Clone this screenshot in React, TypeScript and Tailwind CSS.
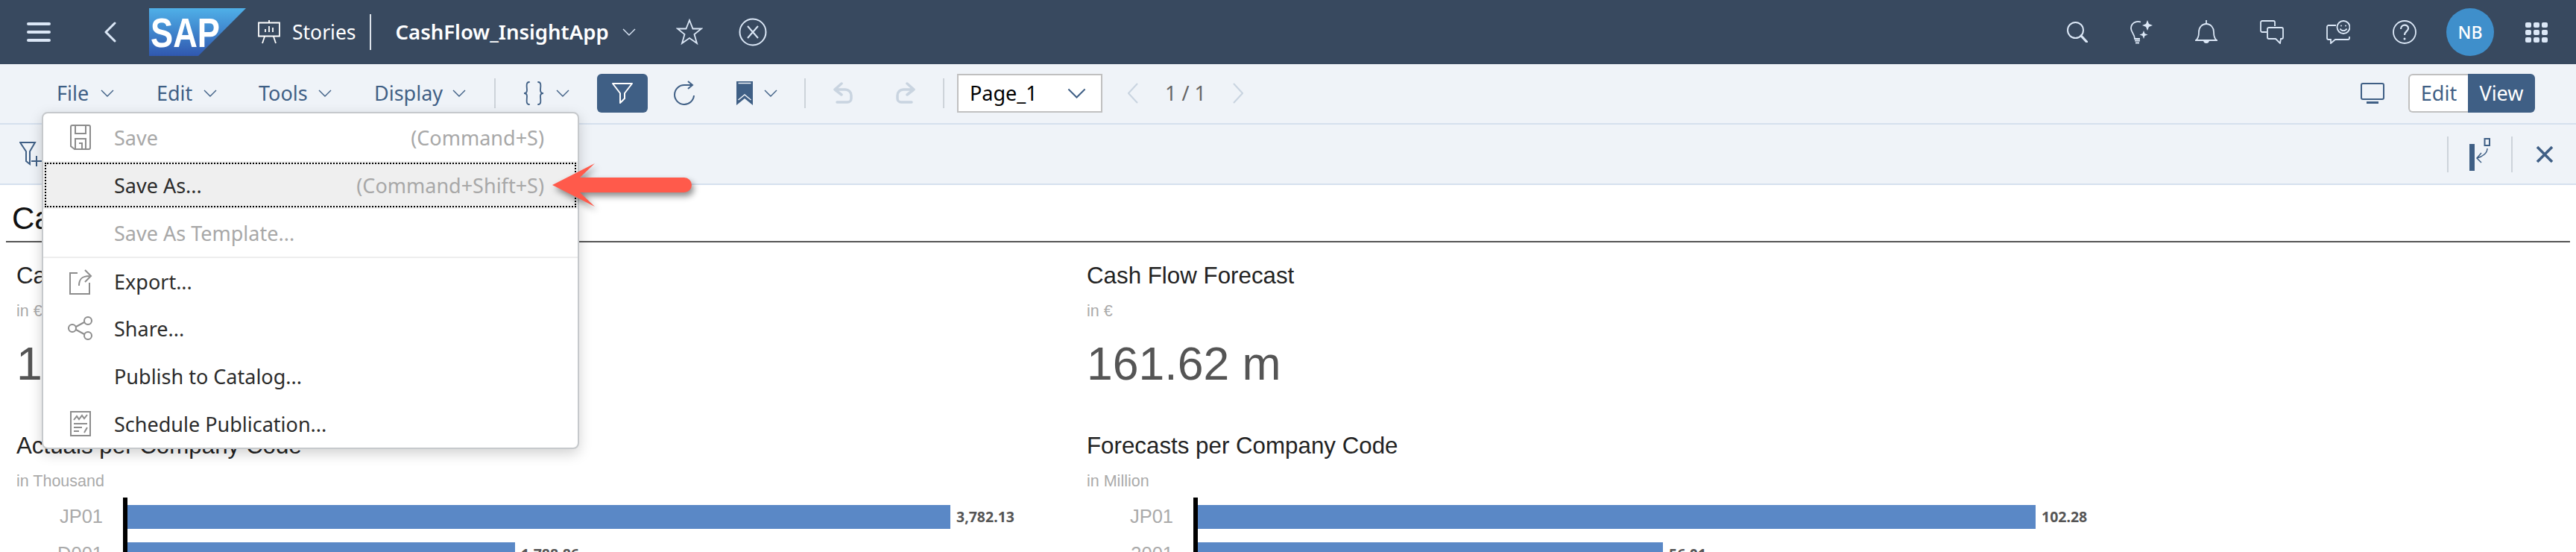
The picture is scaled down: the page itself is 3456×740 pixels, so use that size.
import type { ReactNode } from 'react';

function Chevron({ className = 'w-[18px] h-[10px] text-[#3f5f85]' }: { className?: string }) {
  return (
    <svg viewBox="0 0 18 10" className={className} fill="none" stroke="currentColor" strokeWidth="1.4">
      <path d="M1 1l8 8 8-8" />
    </svg>
  );
}

function Sep({ h = 'h-[40px]' }: { h?: string }) {
  return <div className={`w-[2px] ${h} bg-[#cdd3da]`} />;
}

function MenuLabel({ label, width }: { label: string; width: string }) {
  return (
    <div className={`flex items-center justify-between ${width}`}>
      <span className="text-[27px] leading-none text-[#3f5f85]">{label}</span>
      <Chevron />
    </div>
  );
}

function HeaderIcons() {
  return (
    <div className="mr-[40px] flex items-center gap-[57px] text-[#dbe7f6]">
      <svg viewBox="0 0 28 28" className="w-[28px] h-[28px]" fill="none" stroke="currentColor" strokeWidth="2">
        <circle cx="11.500" cy="11.500" r="10.500" />
        <path d="M19 19l7.500 8" strokeWidth="3.200" strokeLinecap="round" />
      </svg>
      <svg viewBox="0 0 30 32" className="w-[30px] h-[32px]" fill="none" stroke="currentColor" strokeWidth="1.800">
        <path d="M14 2.500C7 0 1 5 1 11c0 5 5 8 5 14h7" />
        <path d="M6 27.500h7M7 30.500h5" strokeWidth="2.200" />
        <path d="M23 0l2 5 5 2-5 2-2 5-2-5-5-2 5-2zM18 14l1.500 4 4 1.500-4 1.500-1.500 4-1.500-4-4-1.500 4-1.500z" fill="currentColor" stroke="none" />
      </svg>
      <svg viewBox="0 0 30 32" className="w-[30px] h-[32px]" fill="none" stroke="currentColor" strokeWidth="1.800">
        <path d="M1 27c3-2 4-5 4-11 0-6 4-11 10-11s10 5 10 11c0 6 1 9 4 11z" />
        <path d="M15 0v5" />
        <path d="M12 27a3 3 0 0 0 6 0" fill="currentColor" />
      </svg>
      <svg viewBox="0 0 32 32" className="w-[32px] h-[32px]" fill="none" stroke="currentColor" strokeWidth="1.800">
        <path d="M9 16H3a2 2 0 0 1-2-2V3a2 2 0 0 1 2-2h15a2 2 0 0 1 2 2v5" />
        <path d="M12 10h17a2 2 0 0 1 2 2v11a2 2 0 0 1-2 2h-1l-1 6-6-6h-9a2 2 0 0 1-2-2V12a2 2 0 0 1 2-2z" />
      </svg>
      <svg viewBox="0 0 32 32" className="w-[32px] h-[32px]" fill="none" stroke="currentColor" strokeWidth="1.800">
        <path d="M13 7H3a2 2 0 0 0-2 2v15a2 2 0 0 0 2 2h3v5l6-5h17a2 2 0 0 0 2-2v-2" />
        <circle cx="23" cy="9.500" r="8.500" />
        <circle cx="20" cy="7.500" r="1" fill="currentColor" stroke="none" />
        <circle cx="26" cy="7.500" r="1" fill="currentColor" stroke="none" />
        <path d="M18.500 11.500c2 3.500 7 3.500 9 0" />
      </svg>
      <svg viewBox="0 0 32 32" className="w-[32px] h-[32px]" fill="none" stroke="currentColor" strokeWidth="1.800">
        <circle cx="16" cy="16" r="15" />
        <path d="M11 12c0-7 10-7 10-1 0 4-5 4-5 9" strokeWidth="2.200" />
        <circle cx="16" cy="25" r="1.500" fill="currentColor" stroke="none" />
      </svg>
    </div>
  );
}

function TopBar() {
  return (
    <header className="flex h-[86px] items-center bg-[#38495f] pl-[36px] pr-[38px]">
      <div className="flex w-[32px] flex-col gap-[7px]">
        <div className="h-[4px] rounded-full bg-[#dbe7f6]" />
        <div className="h-[4px] rounded-full bg-[#dbe7f6]" />
        <div className="h-[4px] rounded-full bg-[#dbe7f6]" />
      </div>
      <svg viewBox="0 0 16 28" className="ml-[72px] w-[16px] h-[28px] text-[#dbe7f6]" fill="none" stroke="currentColor" strokeWidth="3" strokeLinecap="round" strokeLinejoin="round">
        <path d="M14 2L2 14l12 12" />
      </svg>
      <svg viewBox="0 0 130 64" className="ml-[44px] w-[130px] h-[64px]">
        <defs>
          <linearGradient id="sapGrad" x1="0" y1="0" x2="0" y2="1">
            <stop offset="0" stopColor="#4fb0e8" />
            <stop offset="1" stopColor="#3058b0" />
          </linearGradient>
        </defs>
        <path d="M0 0h130L66 64H0z" fill="url(#sapGrad)" />
        <text x="2" y="52" fill="#fff" fontFamily="Liberation Sans" fontWeight="700" fontSize="56" textLength="93" lengthAdjust="spacingAndGlyphs">SAP</text>
      </svg>
      <svg viewBox="0 0 30 32" className="ml-[16px] w-[30px] h-[32px] text-white" fill="none" stroke="currentColor" strokeWidth="1.800">
        <path d="M15 0v3M1 3.500h28v18H1zM9 22l-3 9M21 22l3 9" />
        <path d="M10 16v-4M15 16V8M20 16v-6" />
      </svg>
      <span className="ml-[16px] text-[26.500px] leading-none text-white">Stories</span>
      <div className="ml-[18px] h-[48px] w-[2px] bg-[#dde3ea]" />
      <span className="ml-[33px] text-[27.500px] leading-none font-semibold text-white">CashFlow_InsightApp</span>
      <Chevron className="ml-[18px] w-[18px] h-[10px] text-[#dbe7f6]" />
      <svg viewBox="0 0 36 36" className="ml-[54px] w-[36px] h-[36px] text-[#dbe7f6]" fill="none" stroke="currentColor" strokeWidth="1.800">
        <path d="M18 2l4.500 11.500H34l-9.500 7.500L28 33l-10-7-10 7 3.500-12L2 13.500h11.500z" />
      </svg>
      <svg viewBox="0 0 38 38" className="ml-[48px] w-[38px] h-[38px] text-[#dbe7f6]" fill="none" stroke="currentColor" strokeWidth="2">
        <circle cx="19" cy="19" r="17.500" />
        <path d="M12 11l14 16M26 11L12 27" />
      </svg>
      <div className="flex-1" />
      <HeaderIcons />
      <div className="flex h-[64px] w-[64px] items-center justify-center rounded-full bg-[#3f8fcb] text-[23px] font-medium text-white">NB</div>
      <div className="ml-[42px] grid grid-cols-3 gap-[3px]">
        {[...Array(9)].map((_, i) => (
          <div key={i} className="h-[7px] w-[8px] rounded-[2px] bg-[#dbe7f6]" />
        ))}
      </div>
    </header>
  );
}

function Toolbar() {
  return (
    <div className="flex h-[81px] items-center border-b-2 border-[#d5e0ee] bg-[#eff3f8] pl-[76px] pr-[55px] pb-[2px]">
      <MenuLabel label="File" width="w-[77px]" />
      <div className="ml-[57px]"><MenuLabel label="Edit" width="w-[81px]" /></div>
      <div className="ml-[56px]"><MenuLabel label="Tools" width="w-[98px]" /></div>
      <div className="ml-[57px]"><MenuLabel label="Display" width="w-[123px]" /></div>
      <div className="ml-[38px]"><Sep /></div>
      <svg viewBox="0 0 30 32" className="ml-[36px] w-[30px] h-[32px] text-[#3f5f85]" fill="none" stroke="currentColor" strokeWidth="1.800" strokeLinecap="round">
        <path d="M9 1C4 1 6 8 6 12c0 3-1 4-4 4 3 0 4 1 4 4 0 4-2 11 3 11M21 1c5 0 3 7 3 11 0 3 1 4 4 4-3 0-4 1-4 4 0 4 2 11-3 11" />
      </svg>
      <Chevron className="ml-[15px] w-[18px] h-[10px] text-[#3f5f85]" />
      <div className="ml-[37px] flex h-[52px] w-[68px] items-center justify-center rounded-[6px] bg-[#3f5f85]">
        <svg viewBox="0 0 28 30" className="w-[28px] h-[30px] text-white" fill="none" stroke="currentColor" strokeWidth="2">
          <path d="M1 2h26L17 15v7l-6 6V15z" strokeLinejoin="round" />
        </svg>
      </div>
      <svg viewBox="0 0 30 34" className="ml-[35px] w-[30px] h-[34px] text-[#3f5f85]" fill="none" stroke="currentColor" strokeWidth="2">
        <path d="M27 20A13 13 0 1 1 14 6h10M19 1l6 5-6 5" />
      </svg>
      <svg viewBox="0 0 22 32" className="ml-[54px] w-[22px] h-[32px] text-[#3f5f85]">
        <path d="M0 0h22v32L11 23 0 32z" fill="currentColor" />
        <path d="M2.500 2.500h17" stroke="#eff3f8" strokeWidth="1.500" />
        <path d="M2.500 25l8.500-7 8.500 7" stroke="#eff3f8" strokeWidth="1.500" fill="none" />
      </svg>
      <Chevron className="ml-[15px] w-[18px] h-[10px] text-[#3f5f85]" />
      <div className="ml-[36px]"><Sep /></div>
      <svg viewBox="0 0 28 30" className="ml-[36px] w-[28px] h-[30px] text-[#c9d4e0]" fill="none" stroke="currentColor" strokeWidth="3.500" strokeLinecap="round" strokeLinejoin="round">
        <path d="M12 2L3 10l9 7M3 10h14a8 8 0 0 1 8 8v4a5 5 0 0 1-5 5H6" />
      </svg>
      <svg viewBox="0 0 28 30" className="ml-[56px] w-[28px] h-[30px] text-[#c9d4e0]" fill="none" stroke="currentColor" strokeWidth="3.500" strokeLinecap="round" strokeLinejoin="round">
        <path d="M16 2l9 8-9 7M25 10H11a8 8 0 0 0-8 8v4a5 5 0 0 0 5 5h14" />
      </svg>
      <div className="ml-[36px]"><Sep /></div>
      <div className="ml-[17px] flex h-[52px] w-[195px] items-center justify-between border-2 border-[#c0c0c0] bg-white pl-[15px] pr-[20px]">
        <span className="text-[27px] leading-none text-black">Page_1</span>
        <Chevron className="w-[25px] h-[14px] text-[#3f5f85]" />
      </div>
      <svg viewBox="0 0 14 28" className="ml-[34px] w-[14px] h-[28px] text-[#c9d4e0]" fill="none" stroke="currentColor" strokeWidth="2">
        <path d="M13 1L1 14l12 13" />
      </svg>
      <span className="ml-[36px] text-[27px] leading-none text-[#666]">1 / 1</span>
      <svg viewBox="0 0 14 28" className="ml-[36px] w-[14px] h-[28px] text-[#c9d4e0]" fill="none" stroke="currentColor" strokeWidth="2">
        <path d="M1 1l12 13L1 27" />
      </svg>
      <div className="flex-1" />
      <svg viewBox="0 0 32 28" className="w-[32px] h-[28px] text-[#3f5f85]" fill="none" stroke="currentColor" strokeWidth="2">
        <rect x="1" y="1" width="30" height="21" rx="2" />
        <path d="M8 26.500h16" strokeWidth="3" />
      </svg>
      <div className="ml-[32px] flex h-[52px] w-[170px]">
        <div className="flex w-[80px] items-center justify-center rounded-l-[6px] border-2 border-r-0 border-[#c0c0c0] bg-white text-[27px] leading-none text-[#3f5f85]">Edit</div>
        <div className="flex w-[90px] items-center justify-center rounded-r-[6px] bg-[#3f5f85] text-[27px] leading-none text-white">View</div>
      </div>
    </div>
  );
}

function FilterBar() {
  return (
    <div className="flex h-[81px] items-center border-b-2 border-[#d5e0ee] bg-[#eff3f8] pl-[26px] pr-[30px]">
      <svg viewBox="0 0 32 34" className="w-[32px] h-[34px] text-[#3f5f85]" fill="none" stroke="currentColor" strokeWidth="2">
        <path d="M1 1h20l-7 12v17l-5-4V13zM23 19v14M16 26h14" />
      </svg>
      <div className="flex-1" />
      <Sep h="h-[48px]" />
      <svg viewBox="0 0 28 44" className="ml-[28px] w-[28px] h-[44px] text-[#3f5f85]" fill="none" stroke="currentColor">
        <rect x="0" y="8" width="7" height="36" fill="currentColor" stroke="none" />
        <rect x="20.500" y="1" width="6.500" height="9" strokeWidth="2" />
        <path d="M24 14c0 6-6 11-14 13M16 20l-6 7 6 6" strokeWidth="1.500" />
      </svg>
      <div className="ml-[28px]"><Sep h="h-[48px]" /></div>
      <svg viewBox="0 0 24 24" className="ml-[31px] w-[24px] h-[24px] text-[#3f5f85]" fill="none" stroke="currentColor" strokeWidth="3.600">
        <path d="M2 2l20 20M22 2L2 22" />
      </svg>
    </div>
  );
}

function Widget({ title, unit, children }: { title: string; unit: string; children: ReactNode }) {
  return (
    <div>
      <h3 className="text-[31.300px] leading-[36px] text-[#222]">{title}</h3>
      <p className="mt-[16px] text-[21.500px] leading-[26px] text-[#aaa]">{unit}</p>
      {children}
    </div>
  );
}

type Bar = { code: string; width: number; value: string };

function BarChart({ bars }: { bars: Bar[] }) {
  return (
    <div className="mt-[9px] ml-[143px] h-[90px] border-l-[6px] border-black pt-[10px]">
      {bars.map((b) => (
        <div key={b.code} className="relative mb-[18px] flex h-[32px] items-center">
          <span className="absolute right-full mr-[33px] text-[25.500px] leading-none text-[#aaa]">{b.code}</span>
          <div className="h-full bg-[#5a88c6]" style={{ width: b.width }} />
          <span className='ml-[8px] font-["Noto_Sans",sans-serif] text-[19.500px] leading-none font-bold text-[#555]'>{b.value}</span>
        </div>
      ))}
    </div>
  );
}

function Kpi({ value }: { value: string }) {
  return <div className="mt-[12px] h-[138px] text-[62.500px] leading-[90px] text-[#555]">{value}</div>;
}

function Content() {
  return (
    <main className='bg-white px-[8px] font-["Liberation_Sans",sans-serif]'>
      <div className="flex h-[77px] items-end border-b-2 border-[#555] pl-[8px] pb-[9px]">
        <h1 className="text-[42px] leading-none text-[#111]">Cash Flow Insights</h1>
      </div>
      <div className="grid grid-cols-[1436px_1fr] pt-[27px] pl-[14px]">
        <div>
          <Widget title="Cash Flow Actuals" unit="in €">
            <Kpi value="170.45 m" />
          </Widget>
          <Widget title="Actuals per Company Code" unit="in Thousand">
            <BarChart bars={[{ code: 'JP01', width: 1104, value: '3,782.13' }, { code: 'D001', width: 520, value: '1,788.86' }]} />
          </Widget>
        </div>
        <div>
          <Widget title="Cash Flow Forecast" unit="in €">
            <Kpi value="161.62 m" />
          </Widget>
          <Widget title="Forecasts per Company Code" unit="in Million">
            <BarChart bars={[{ code: 'JP01', width: 1124, value: '102.28' }, { code: '3001', width: 624, value: '56.01' }]} />
          </Widget>
        </div>
      </div>
    </main>
  );
}

function Item({ label, shortcut, icon, disabled, active, divider }: { label: string; shortcut?: string; icon?: ReactNode; disabled?: boolean; active?: boolean; divider?: boolean }) {
  return (
    <div className={`flex h-[64px] items-center pr-[45px] ${divider ? 'border-t-2 border-[#eeeeee]' : ''} ${active ? 'bg-[#efefef] outline-2 outline-dotted -outline-offset-[4px] outline-black' : ''}`}>
      <div className="flex w-[95px] justify-center pl-[4px] text-[#8c8c8c]">{icon}</div>
      <span className={`text-[27px] leading-none ${disabled ? 'text-[#a8a8a8]' : 'text-[#2b2b2b]'}`}>{label}</span>
      <div className="flex-1" />
      {shortcut && <span className="text-[27px] leading-none text-[#a8a8a8]">{shortcut}</span>}
    </div>
  );
}

function FileMenu() {
  return (
    <div className="absolute left-[56px] top-[150px] w-[721px] rounded-[8px] border-2 border-[#c6c9cc] bg-white shadow-[0_6px_18px_rgba(0,0,0,0.18)]">
      <Item
        label="Save"
        shortcut="(Command+S)"
        disabled
        icon={
          <svg viewBox="0 0 28 34" className="w-[28px] h-[34px]" fill="none" stroke="currentColor" strokeWidth="2">
            <path d="M3 1h22a2 2 0 0 1 2 2v28a2 2 0 0 1-2 2H6l-5-4V3a2 2 0 0 1 2-2zM7 1v11h14V1M7 33V19h14v14M12 25h4v8" />
          </svg>
        }
      />
      <Item label="Save As..." shortcut="(Command+Shift+S)" active />
      <Item label="Save As Template..." disabled />
      <Item
        label="Export..."
        divider
        icon={
          <svg viewBox="0 0 32 36" className="w-[32px] h-[36px]" fill="none" stroke="currentColor" strokeWidth="2">
            <path d="M12 7H2v28h26V20M14 24c0-9 4-13 14-13M22 3l8 8-8 8" />
          </svg>
        }
      />
      <Item
        label="Share..."
        icon={
          <svg viewBox="0 0 34 32" className="w-[34px] h-[32px]" fill="none" stroke="currentColor" strokeWidth="2">
            <circle cx="6" cy="16" r="5" />
            <circle cx="27" cy="6" r="5" />
            <circle cx="27" cy="26" r="5" />
            <path d="M11 14l11-6M11 18l11 6" />
          </svg>
        }
      />
      <Item label="Publish to Catalog..." />
      <Item
        label="Schedule Publication..."
        icon={
          <svg viewBox="0 0 28 34" className="w-[28px] h-[34px]" fill="none" stroke="currentColor" strokeWidth="2">
            <rect x="1" y="1" width="26" height="32" />
            <path d="M5 12l4-5 3 4 4-5 3 4 4-5M5 17h18M5 22h11M5 27h7M19 29l4-7" />
          </svg>
        }
      />
    </div>
  );
}

function Arrow() {
  return (
    <svg viewBox="0 0 200 76" className="absolute left-[741px] top-[215px] w-[200px] h-[76px] drop-shadow-[3px_5px_4px_rgba(0,0,0,0.45)]">
      <path d="M0 33L57 4 37 23h140a10 10 0 0 1 0 20H37l20 19z" fill="#ff5a4b" />
    </svg>
  );
}

export default function App() {
  return (
    <div className='relative h-[740px] w-[3456px] overflow-hidden bg-white font-["Noto_Sans",sans-serif]'>
      <TopBar />
      <Toolbar />
      <FilterBar />
      <Content />
      <FileMenu />
      <Arrow />
    </div>
  );
}
